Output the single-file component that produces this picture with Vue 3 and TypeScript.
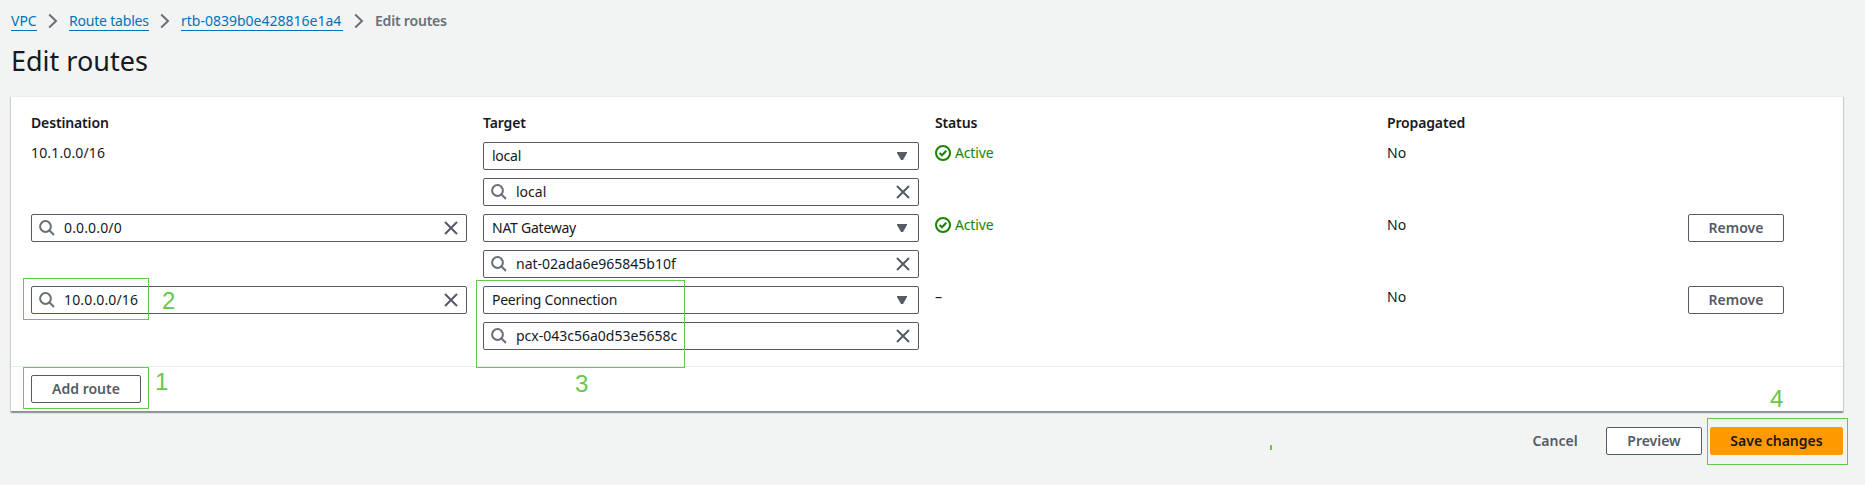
<script setup lang="ts">
interface Route {
  destination: string
  editable: boolean
  target: string
  resource: string
  active: boolean
}

const crumbs: { label: string; cls: string }[] = [
  { label: 'VPC', cls: 'crumb-vpc' },
  { label: 'Route tables', cls: 'crumb-tables' },
  { label: 'rtb-0839b0e428816e1a4', cls: 'crumb-id' },
]

const routes: Route[] = [
  { destination: '10.1.0.0/16', editable: false, target: 'local', resource: 'local', active: true },
  { destination: '0.0.0.0/0', editable: true, target: 'NAT Gateway', resource: 'nat-02ada6e965845b10f', active: true },
  { destination: '10.0.0.0/16', editable: true, target: 'Peering Connection', resource: 'pcx-043c56a0d53e5658c', active: false },
]
</script>

<template>
  <div class="page">
    <nav class="crumbs">
      <template v-for="c in crumbs" :key="c.label">
        <a :class="['link', c.cls]">{{ c.label }}</a>
        <svg class="chevron" viewBox="0 0 10 16"><path d="M1.2 1.5 8 8l-6.800 6.500" /></svg>
      </template>
      <span class="current">Edit routes</span>
    </nav>
    <h1>Edit routes</h1>

    <section class="card">
      <div class="grid head">
        <span>Destination</span>
        <span>Target</span>
        <span>Status</span>
        <span>Propagated</span>
      </div>
      <div class="rows">
        <div v-for="r in routes" :key="r.destination" class="grid row">
          <div v-if="r.editable" class="field">
            <svg class="search" viewBox="0 0 16 16"><circle cx="6.500" cy="6.500" r="5.400" /><path d="m10.300 10.300 4.700 4.700" /></svg>
            <span class="value cidr">{{ r.destination }}</span>
            <svg class="clear" viewBox="0 0 14 14"><path d="m1 1 12 12M13 1 1 13" /></svg>
          </div>
          <span v-else class="plain cidr">{{ r.destination }}</span>
          <div class="target">
            <div class="field">
              <span class="select-value">{{ r.target }}</span>
              <svg class="caret" viewBox="0 0 10 8"><path d="M0 0h10v1L6 8H4L0 1z" /></svg>
            </div>
            <div class="field">
              <svg class="search" viewBox="0 0 16 16"><circle cx="6.500" cy="6.500" r="5.400" /><path d="m10.300 10.300 4.700 4.700" /></svg>
              <span class="value">{{ r.resource }}</span>
              <svg class="clear" viewBox="0 0 14 14"><path d="m1 1 12 12M13 1 1 13" /></svg>
            </div>
          </div>
          <div v-if="r.active" class="plain status">
            <svg viewBox="0 0 16 16"><circle cx="8" cy="8" r="7" /><path d="m4.600 8 2.400 2.300L11.300 5.700" /></svg>
            <span>Active</span>
          </div>
          <span v-else class="plain">–</span>
          <span class="plain">No</span>
          <button v-if="r.editable" class="btn">Remove</button>
        </div>
      </div>
      <div class="card-foot">
        <button class="btn add">Add route</button>
      </div>
    </section>

    <div class="actions">
      <button class="btn link-btn">Cancel</button>
      <button class="btn">Preview</button>
      <button class="btn primary">Save changes</button>
    </div>

    <div class="mark mark-1"><b>1</b></div>
    <div class="mark mark-2"><b>2</b></div>
    <div class="mark mark-3"><b>3</b></div>
    <div class="mark mark-4"><b>4</b></div>
    <i class="tick"></i>
  </div>
</template>

<style>
body {
  margin: 0;
  background: #f2f3f3;
}
</style>

<style scoped>
.page {
  position: relative;
  box-sizing: border-box;
  width: 1865px;
  height: 485px;
  padding: 10px 22px 0 11px;
  overflow: hidden;
  background: #f2f3f3;
  color: #16191f;
  font: 14px/22px "Noto Sans", "Open Sans", sans-serif;
  white-space: nowrap;
}
.crumbs {
  display: flex;
  align-items: flex-start;
  height: 22px;
}
.link {
  box-sizing: border-box;
  height: 21px;
  color: #0073bb;
  border-bottom: 1px solid #0073bb;
}
.crumb-vpc { width: 26px; }
.crumb-tables { width: 80px; letter-spacing: -0.2px; }
.crumb-id { width: 162px; }
.chevron {
  width: 10px;
  height: 16px;
  margin: 3px 11px;
  fill: none;
  stroke: #687078;
  stroke-width: 2;
}
.current {
  color: #687078;
  font-weight: 600;
  letter-spacing: -0.2px;
}
h1 {
  margin: 11px 0 0;
  height: 53px;
  font-size: 27px;
  font-weight: 400;
  line-height: 36px;
}
.card {
  box-sizing: border-box;
  width: 1832px;
  height: 316px;
  background: #fff;
  box-shadow: 0 1px 1px 0 rgba(0, 28, 36, 0.15), 1px 1px 1px 0 rgba(0, 28, 36, 0.15), -1px 1px 1px 0 rgba(0, 28, 36, 0.15);
  border-bottom: 1px solid #879196;
  border-top: 1px solid #eaeded;
}
.grid {
  display: grid;
  grid-template-columns: 436px 436px 436px 285px 96px;
  column-gap: 16px;
  padding-left: 20px;
}
.head {
  height: 45px;
  padding-top: 15px;
  box-sizing: border-box;
  font-weight: 600;
  letter-spacing: -0.15px;
}
.rows {
  display: grid;
  row-gap: 8px;
  height: 224px;
  align-content: start;
}
.row {
  height: 64px;
  align-items: start;
}
.target {
  display: grid;
  row-gap: 8px;
}
.field {
  box-sizing: border-box;
  display: flex;
  align-items: center;
  height: 28px;
  padding: 0 8px;
  border: 1px solid #545b64;
  border-radius: 2px;
  background: #fff;
}
.search {
  width: 16px;
  height: 16px;
  margin: 0 9px 0 -1px;
  fill: none;
  stroke: #687078;
  stroke-width: 2;
}
.value {
  flex: 1;
}
.cidr {
  letter-spacing: 0.15px;
}
.select-value {
  flex: 1;
  letter-spacing: -0.25px;
}
.clear {
  width: 14px;
  height: 14px;
  fill: none;
  stroke: #545b64;
  stroke-width: 2;
}
.caret {
  width: 10px;
  height: 8px;
  margin-right: 3px;
  fill: #545b64;
}
.plain {
  height: 22px;
}
.status {
  display: flex;
  gap: 4px;
  color: #1d8102;
  letter-spacing: -0.15px;
}
.status svg {
  width: 16px;
  height: 16px;
  margin-top: 3px;
  fill: none;
  stroke: #1d8102;
  stroke-width: 2;
}
.btn {
  box-sizing: border-box;
  width: 96px;
  height: 28px;
  padding: 0;
  border: 1px solid #545b64;
  border-radius: 2px;
  background: #fff;
  color: #545b64;
  font: inherit;
  font-weight: 600;
  line-height: 26px;
}
.card-foot {
  height: 45px;
  padding: 8px 20px 0;
  box-sizing: border-box;
  border-top: 1px solid #eaeded;
}
.add {
  display: block;
  width: 110px;
}
.actions {
  display: flex;
  justify-content: flex-end;
  gap: 8px;
  padding-top: 15px;
}
.link-btn {
  background: transparent;
  border-color: transparent;
  width: 86px;
}
.primary {
  width: 133px;
  background: #ff9900;
  border-color: #ff9900;
  color: #16191f;
}
.mark {
  position: absolute;
  box-sizing: border-box;
  border: 1px solid #64c84b;
}
.mark b {
  position: absolute;
  color: #64c84b;
  font: 400 24px/24px "Liberation Sans", Arial, sans-serif;
}
.mark-1 { left: 23px; top: 367px; width: 126px; height: 42px; }
.mark-1 b { left: 131px; top: 2px; }
.mark-2 { left: 23px; top: 278px; width: 126px; height: 42px; }
.mark-2 b { left: 138px; top: 10px; }
.mark-3 { left: 476px; top: 280px; width: 209px; height: 88px; }
.mark-3 b { left: 98px; top: 91px; }
.mark-4 { left: 1707px; top: 418px; width: 141px; height: 47px; }
.mark-4 b { left: 62px; top: -32px; }
.tick {
  position: absolute;
  left: 1270px;
  top: 445px;
  width: 2px;
  height: 5px;
  background: #64c84b;
}
</style>
